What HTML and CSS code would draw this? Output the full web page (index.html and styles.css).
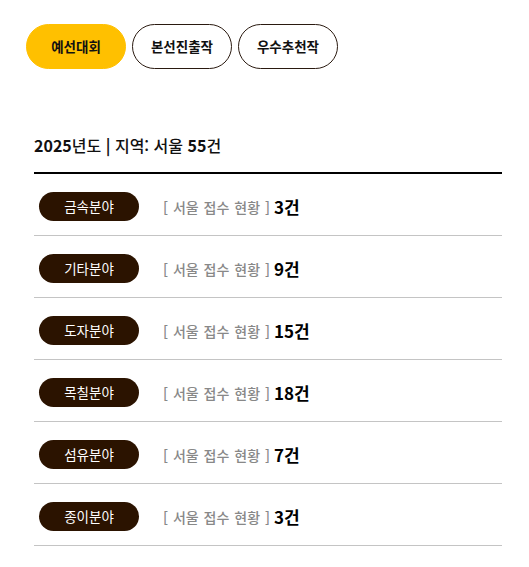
FILE: index.html
```html
<!DOCTYPE html>
<html lang="ko">
<head>
<meta charset="utf-8">
<link rel="stylesheet" href="styles.css">
</head>
<body>
<div class="page">
  <nav class="tabs">
    <a class="tab active">예선대회</a>
    <a class="tab">본선진출작</a>
    <a class="tab">우수추천작</a>
  </nav>
  <section class="summary">
    <h2 class="title"><b>2025</b>년도 <b>|</b> 지역: 서울 <b>55</b>건</h2>
    <ul class="list">
      <li class="row"><span class="pill">금속분야</span><span class="label">[ 서울 접수 현황 ]</span><span class="count">3건</span></li>
      <li class="row"><span class="pill">기타분야</span><span class="label">[ 서울 접수 현황 ]</span><span class="count">9건</span></li>
      <li class="row"><span class="pill">도자분야</span><span class="label">[ 서울 접수 현황 ]</span><span class="count">15건</span></li>
      <li class="row"><span class="pill">목칠분야</span><span class="label">[ 서울 접수 현황 ]</span><span class="count">18건</span></li>
      <li class="row"><span class="pill">섬유분야</span><span class="label">[ 서울 접수 현황 ]</span><span class="count">7건</span></li>
      <li class="row"><span class="pill">종이분야</span><span class="label">[ 서울 접수 현황 ]</span><span class="count">3건</span></li>
    </ul>
  </section>
</div>
</body>
</html>
```
FILE: styles.css
```css
* { box-sizing: border-box; }
html, body { margin: 0; padding: 0; background: #fff; }
body {
  font-family: "Noto Sans CJK KR", "Noto Sans", sans-serif;
  color: #111;
}
.page { width: 529px; }
.tabs {
  display: flex;
  gap: 6px;
  padding: 24px 0 0 26px;
}
.tab {
  width: 100px;
  height: 45px;
  border: 1px solid #2a1a10;
  border-radius: 23px;
  display: flex;
  align-items: center;
  justify-content: center;
  font-size: 13.5px;
  font-weight: 700;
  color: #111;
  line-height: 1;
}
.tab.active {
  background: #ffc000;
  border-color: #ffc000;
}
.summary {
  margin: 0 27px 0 34px;
  padding-top: 66px;
}
.title {
  margin: 0;
  font-size: 16px;
  font-weight: 500;
  line-height: 20px;
  padding-bottom: 17px;
  border-bottom: 2px solid #000;
  color: #111;
}
.title b { font-weight: 700; }
.list { list-style: none; margin: 0; padding: 0; }
.row {
  display: flex;
  align-items: center;
  height: 62px;
  padding: 4px 0 0 5px;
  border-bottom: 1px solid #c4c4c4;
}
.pill {
  width: 100px;
  height: 29px;
  border-radius: 15px;
  background: #2b1300;
  color: #fff;
  font-size: 13.5px;
  display: flex;
  align-items: center;
  justify-content: center;
  line-height: 1;
}
.label {
  margin-left: 24px;
  font-size: 14px;
  word-spacing: 1px;
  color: #888;
  font-weight: 500;
}
.count {
  margin-left: 4px;
  font-size: 17px;
  font-weight: 700;
  color: #000;
}
```
